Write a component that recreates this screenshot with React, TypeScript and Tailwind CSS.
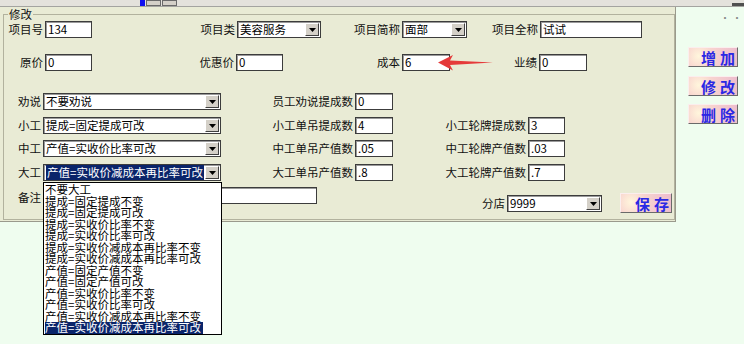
import React from "react";

const FONT = "font-['Noto_Sans_CJK_SC','Noto_Sans',sans-serif]";

function Label({ w, text }: { w: string; text: string }) {
  return (
    <span className={`${w} shrink-0 pr-[2px] text-right text-[11.5px] leading-[17px] text-[#111]`}>
      {text}
    </span>
  );
}

function Input({ w, value }: { w: string; value?: string }) {
  return (
    <div
      className={`${w} h-[17px] shrink-0 overflow-hidden border border-[#3c3c3c] bg-white pl-[2px] text-[11.5px] leading-[15px] text-black shadow-[inset_1px_1px_0_#9a9a9a]`}
    >
      {value}
    </div>
  );
}

function Arrow() {
  return (
    <span className="mr-[1px] flex h-[13px] w-[14px] shrink-0 items-center justify-center border border-t-white border-l-white border-r-[#404040] border-b-[#404040] bg-[#d4d0c8]">
      <svg width="7" height="4" viewBox="0 0 7 4">
        <path d="M0 0h7L3.5 4z" fill="#000" />
      </svg>
    </span>
  );
}

function Select({ w, value, selected }: { w: string; value: string; selected?: boolean }) {
  return (
    <div
      className={`${w} flex h-[17px] shrink-0 items-center border border-[#3c3c3c] bg-white shadow-[inset_1px_1px_0_#9a9a9a]`}
    >
      <span className="min-w-0 flex-1 overflow-hidden whitespace-nowrap pl-[2px] text-[11.5px] leading-[15px]">
        {selected ? <span className="bg-[#0a246a] px-[1px] text-white">{value}</span> : value}
      </span>
      <Arrow />
    </div>
  );
}

function PinkButton({ text, w = "w-[50px]" }: { text: string; w?: string }) {
  return (
    <div
      className={`${w} flex h-[20px] shrink-0 items-center justify-end gap-[4px] border border-t-[#fbeeee] border-l-[#fbeeee] border-r-[#6a6a6a] border-b-[#6a6a6a] bg-[radial-gradient(circle_at_20%_45%,#fff6dc_0%,#f8d4cf_35%,#ecbccd_100%)] pr-[2px] text-[15px] font-bold leading-none text-[#2a28e4]`}
    >
      {text.split("").map((c) => (
        <span key={c}>{c}</span>
      ))}
    </div>
  );
}

const options = [
  "不要大工",
  "提成=固定提成不变",
  "提成=固定提成可改",
  "提成=实收价比率不变",
  "提成=实收价比率可改",
  "提成=实收价减成本再比率不变",
  "提成=实收价减成本再比率可改",
  "产值=固定产值不变",
  "产值=固定产值可改",
  "产值=实收价比率不变",
  "产值=实收价比率可改",
  "产值=实收价减成本再比率不变",
  "产值=实收价减成本再比率可改",
];

export default function App() {
  return (
    <div className={`relative h-[344px] w-[744px] overflow-hidden bg-[#effdef] ${FONT}`}>
      {/* top strip */}
      <div className="flex h-[7px] items-start border-b border-[#a4a4a0] bg-[#e4e2dc]">
        <div className="ml-[140px] h-[6px] w-[5px] bg-[#1010f0]" />
        <div className="ml-[1px] h-[6px] w-[15px] border border-[#6a6a6a] bg-[#d4d0c8]" />
        <div className="ml-[1px] h-[6px] w-[15px] border border-[#6a6a6a] bg-[#d4d0c8]" />
        <div className="ml-auto mt-[3px] h-[3px] w-[12px] bg-[#505050]" />
      </div>

      <div className="flex">
        {/* main panel */}
        <div className="h-[215px] w-[676px] shrink-0 border-r border-b border-[#9a9a8c] bg-[#e9ebd5]">
          <div className="relative ml-[3px] mt-[7px] h-[206px] w-[672px] border border-[#b2b29e]">
            <span className="absolute left-[4px] top-[-7px] bg-[#e9ebd5] px-[1px] text-[11.5px] leading-[12px] text-[#111]">
              修改
            </span>

            <div className="mt-[6px] flex items-center">
              <Label w="w-[41px]" text="项目号" />
              <Input w="w-[47px]" value="134" />
              <Label w="w-[145px]" text="项目类" />
              <Select w="w-[84px]" value="美容服务" />
              <Label w="w-[81px]" text="项目简称" />
              <Select w="w-[65px]" value="面部" />
              <Label w="w-[73px]" text="项目全称" />
              <Input w="w-[102px]" value="试试" />
            </div>

            <div className="mt-[16px] flex items-center">
              <Label w="w-[41px]" text="原价" />
              <Input w="w-[47px]" value="0" />
              <Label w="w-[144px]" text="优惠价" />
              <Input w="w-[47px]" value="0" />
              <Label w="w-[119px]" text="成本" />
              <Input w="w-[48px]" value="6" />
              <Label w="w-[89px]" text="业绩" />
              <Input w="w-[48px]" value="0" />
            </div>

            <div className="mt-[22px] flex items-center">
              <Label w="w-[39px]" text="劝说" />
              <Select w="w-[178px]" value="不要劝说" />
              <Label w="w-[134px]" text="员工劝说提成数" />
              <Input w="w-[38px]" value="0" />
            </div>

            <div className="mt-[7px] flex items-center">
              <Label w="w-[39px]" text="小工" />
              <Select w="w-[178px]" value="提成=固定提成可改" />
              <Label w="w-[134px]" text="小工单吊提成数" />
              <Input w="w-[38px]" value="4" />
              <Label w="w-[135px]" text="小工轮牌提成数" />
              <Input w="w-[37px]" value="3" />
            </div>

            <div className="mt-[6px] flex items-center">
              <Label w="w-[39px]" text="中工" />
              <Select w="w-[178px]" value="产值=实收价比率可改" />
              <Label w="w-[134px]" text="中工单吊产值数" />
              <Input w="w-[38px]" value=".05" />
              <Label w="w-[135px]" text="中工轮牌产值数" />
              <Input w="w-[37px]" value=".03" />
            </div>

            <div className="mt-[7px] flex items-center">
              <Label w="w-[39px]" text="大工" />
              <Select w="w-[178px]" value="产值=实收价减成本再比率可改" selected />
              <Label w="w-[134px]" text="大工单吊产值数" />
              <Input w="w-[38px]" value=".8" />
              <Label w="w-[135px]" text="大工轮牌产值数" />
              <Input w="w-[37px]" value=".7" />
            </div>

            <div className="mt-[6px] flex items-start">
              <span className="mt-[3px] w-[39px] shrink-0 pr-[2px] text-right text-[11.5px] leading-[15px] text-[#111]">
                备注
              </span>
              <Input w="w-[274px]" />
              <div className="mt-[8px] flex items-center">
                <Label w="w-[190px]" text="分店" />
                <Select w="w-[95px]" value="9999" />
              </div>
              <div className="ml-[18px] mt-[6px]">
                <PinkButton text="保存" w="w-[52px]" />
              </div>
            </div>
          </div>
        </div>

        {/* right buttons */}
        <div className="flex w-[68px] flex-col">
          <div className="h-[20px] pl-[44px] pt-[6px] text-[10px] leading-none tracking-[2px] text-[#888]">
            ··
          </div>
          <div className="ml-[12px] mt-[20px]">
            <PinkButton text="增加" />
          </div>
          <div className="ml-[12px] mt-[9px]">
            <PinkButton text="修改" />
          </div>
          <div className="ml-[12px] mt-[8px]">
            <PinkButton text="删除" />
          </div>
        </div>
      </div>

      {/* red arrow annotation */}
      <svg className="absolute left-[436px] top-[54px]" width="58" height="18" viewBox="0 0 58 18">
        <path d="M2 8.5L17 1L14 6.5L57 8.5L14 11L17 16.5Z" fill="#e53a3a" />
      </svg>

      {/* open dropdown list */}
      <div className="absolute left-[43px] top-[182px] h-[153px] w-[179px] border border-[#000] bg-white pt-[1px] text-[11.5px] text-black">
        {options.map((o, i) => (
          <div key={o} className="h-[11.5px] whitespace-nowrap pl-[1px] leading-[11.5px]">
            {i === options.length - 1 ? (
              <span className="inline-block h-[11.5px] bg-[#0a246a] pr-[2px] leading-[11.5px] text-white">
                {o}
              </span>
            ) : (
              o
            )}
          </div>
        ))}
      </div>
    </div>
  );
}
